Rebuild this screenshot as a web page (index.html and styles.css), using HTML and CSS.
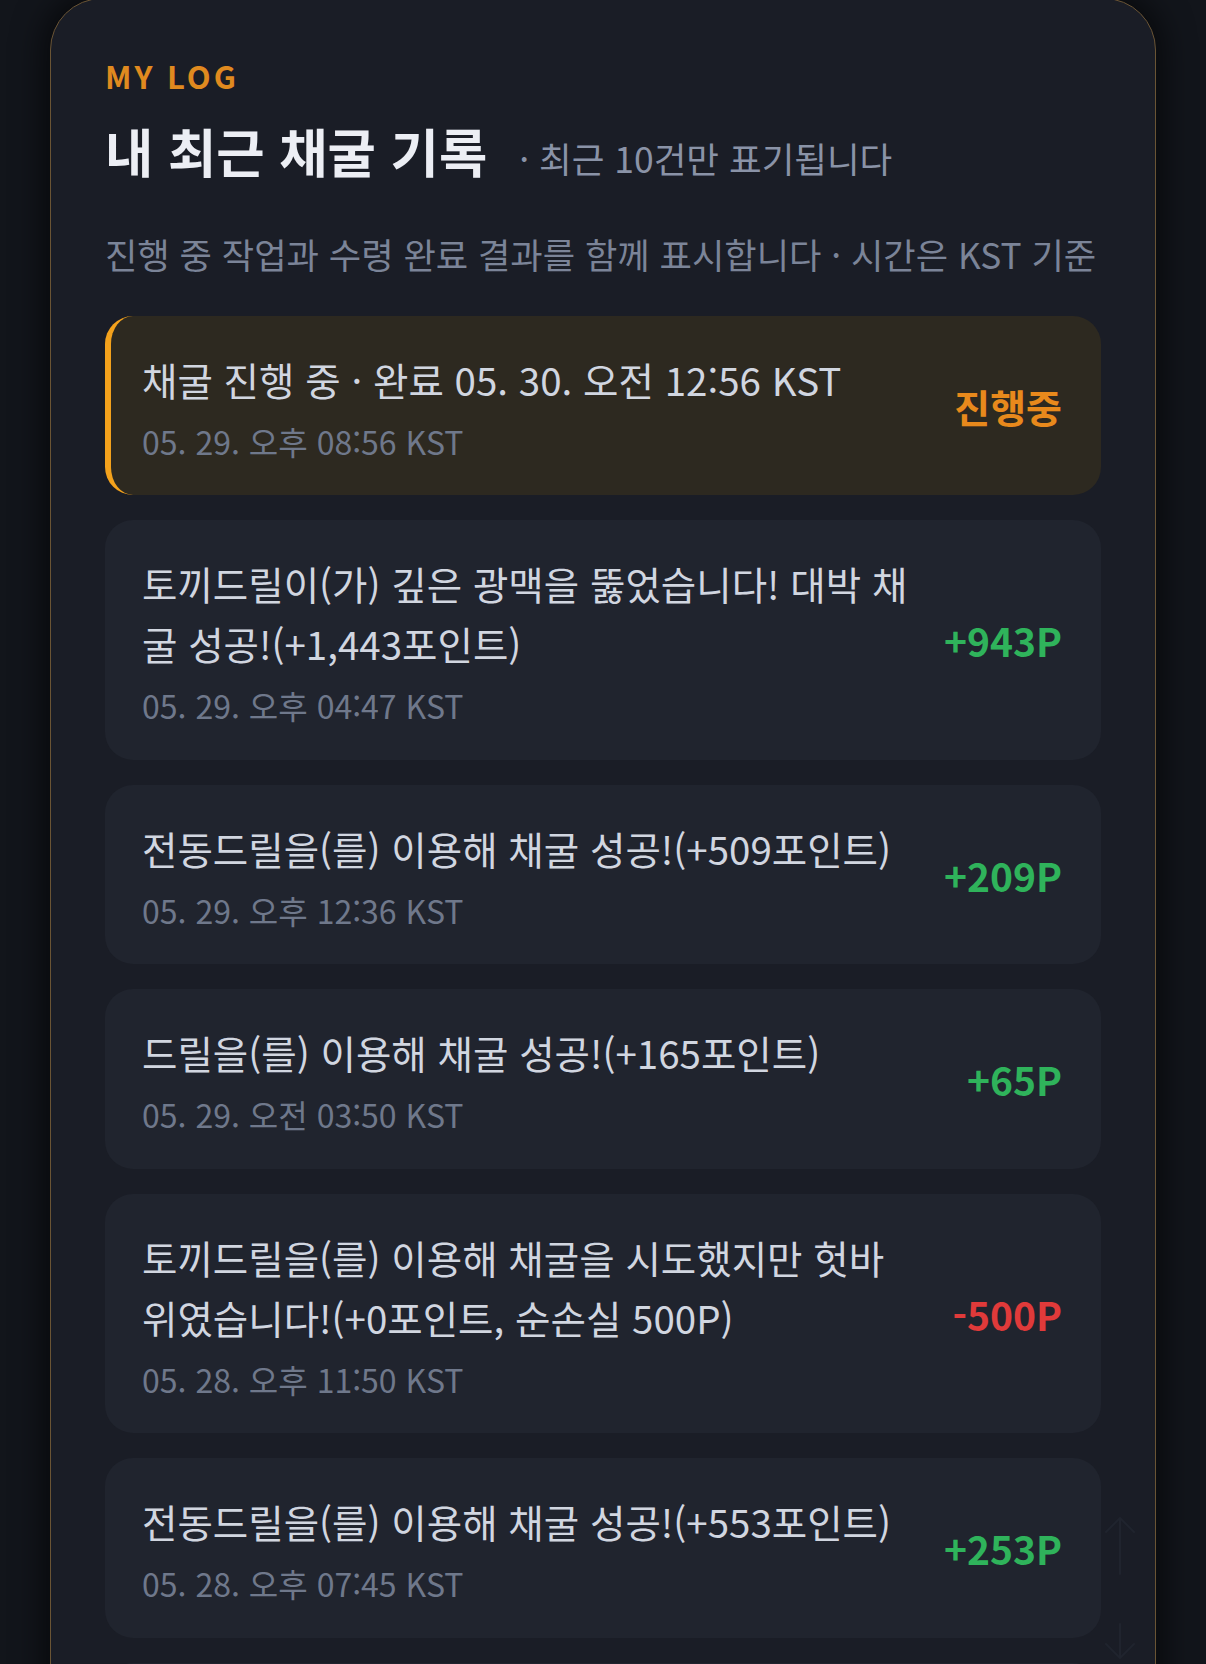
FILE: index.html
```html
<!DOCTYPE html>
<html lang="ko">
<head>
<meta charset="utf-8">
<title>MY LOG</title>
<link rel="stylesheet" href="styles.css">
</head>
<body>
<div class="page">
  <section class="card">
    <div class="eyebrow">MY LOG</div>
    <div class="head">
      <h1 class="title">내 최근 채굴 기록</h1>
      <span class="sub">· 최근 10건만 표기됩니다</span>
    </div>
    <p class="desc">진행 중 작업과 수령 완료 결과를 함께 표시합니다 · 시간은 KST 기준</p>
    <ul class="list">
      <li class="item pending">
        <div class="body">
          <div class="msg">채굴 진행 중 · 완료 05. 30. 오전 12:56 KST</div>
          <div class="time">05. 29. 오후 08:56 KST</div>
        </div>
        <div class="amt orange">진행중</div>
      </li>
      <li class="item">
        <div class="body">
          <div class="msg">토끼드릴이(가) 깊은 광맥을 뚫었습니다! 대박 채굴 성공!(+1,443포인트)</div>
          <div class="time">05. 29. 오후 04:47 KST</div>
        </div>
        <div class="amt green">+943P</div>
      </li>
      <li class="item">
        <div class="body">
          <div class="msg">전동드릴을(를) 이용해 채굴 성공!(+509포인트)</div>
          <div class="time">05. 29. 오후 12:36 KST</div>
        </div>
        <div class="amt green">+209P</div>
      </li>
      <li class="item">
        <div class="body">
          <div class="msg">드릴을(를) 이용해 채굴 성공!(+165포인트)</div>
          <div class="time">05. 29. 오전 03:50 KST</div>
        </div>
        <div class="amt green">+65P</div>
      </li>
      <li class="item">
        <div class="body">
          <div class="msg">토끼드릴을(를) 이용해 채굴을 시도했지만 헛바위였습니다!(+0포인트, 순손실 500P)</div>
          <div class="time">05. 28. 오후 11:50 KST</div>
        </div>
        <div class="amt red">-500P</div>
      </li>
      <li class="item">
        <div class="body">
          <div class="msg">전동드릴을(를) 이용해 채굴 성공!(+553포인트)</div>
          <div class="time">05. 28. 오후 07:45 KST</div>
        </div>
        <div class="amt green">+253P</div>
      </li>
      <li class="item">
        <div class="body">
          <div class="msg">드릴을(를) 이용해 채굴 성공!(+180포인트)</div>
          <div class="time">05. 28. 오후 03:12 KST</div>
        </div>
        <div class="amt green">+80P</div>
      </li>
    </ul>
  </section>
</div>
<svg class="scroll-hint" width="40" height="150" viewBox="0 0 40 150" aria-hidden="true">
  <path d="M20 6 V62 M6 20 L20 6 L34 20" />
  <path d="M20 112 V146 M6 132 L20 146 L34 132" />
</svg>
</body>
</html>
```

FILE: styles.css
```css
html, body {
  margin: 0;
  padding: 0;
}
body {
  background: #12151b;
  font-family: "Noto Sans CJK KR", "Noto Sans", sans-serif;
  overflow: hidden;
  height: 1664px;
}
.page {
  padding: 0 50px;
}
.card {
  margin-top: -2px;
  background: #1a1d26;
  border: 1.5px solid #6a5434;
  border-radius: 52px;
  padding: 59px 54px 40px;
  box-shadow: 0 0 30px 8px rgba(0, 0, 0, 0.55);
}
.eyebrow {
  color: #e08a1f;
  font-size: 31px;
  font-weight: 700;
  line-height: 36px;
  letter-spacing: 3px;
}
.head {
  display: flex;
  align-items: baseline;
  gap: 32px;
  margin-top: 24px;
}
.title {
  margin: 0;
  font-size: 52.5px;
  font-weight: 700;
  line-height: 65px;
  color: #eceef4;
}
.sub {
  font-size: 35.5px;
  color: #8a93a7;
}
.desc {
  margin: 45px 0 0;
  font-size: 35.2px;
  line-height: 51px;
  color: #7b8498;
  white-space: nowrap;
}
.list {
  list-style: none;
  margin: 37px 0 0;
  padding: 0;
  display: flex;
  flex-direction: column;
  gap: 25px;
}
.item {
  display: flex;
  align-items: center;
  background: #20242e;
  border-radius: 28px;
  padding: 33px 39px 32.5px 37px;
}
.item.pending {
  background: #2d2920;
  border-left: 6px solid #f4a21c;
  padding-left: 31px;
  padding-bottom: 32px;
}
.body {
  flex: 1;
  min-width: 0;
}
.msg {
  font-size: 38.5px;
  line-height: 60px;
  color: #d1d6e0;
}
.time {
  margin-top: 10px;
  font-size: 32px;
  line-height: 44px;
  color: #6f788b;
}
.amt {
  flex: none;
  min-width: 127px;
  margin-left: 20px;
  text-align: right;
  font-size: 39px;
  font-weight: 700;
}
.orange { color: #e8891c; }
.green { color: #2fb35b; }
.red { color: #e03a3a; }
.scroll-hint {
  position: fixed;
  left: 1100px;
  top: 1512px;
  fill: none;
  stroke: #20242e;
  stroke-width: 2;
  stroke-linecap: round;
  stroke-linejoin: round;
}
```
